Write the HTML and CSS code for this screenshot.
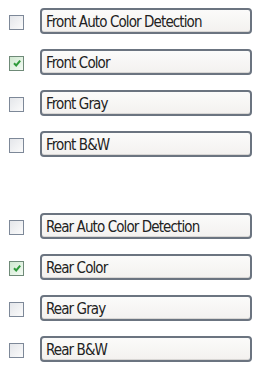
FILE: index.html
```html
<!DOCTYPE html>
<html>
<head>
<meta charset="utf-8">
<link rel="stylesheet" href="styles.css">
</head>
<body>
<div class="list">
  <div class="row"><span class="cb"></span><div class="btn">Front Auto Color Detection</div></div>
  <div class="row"><span class="cb checked"><svg viewBox="0 0 10 10" width="10" height="10"><path d="M2 5.2 L4.2 7.4 L8.2 2.6" fill="none" stroke="#2f9a3a" stroke-width="2"/></svg></span><div class="btn">Front Color</div></div>
  <div class="row"><span class="cb"></span><div class="btn">Front Gray</div></div>
  <div class="row"><span class="cb"></span><div class="btn">Front B&amp;W</div></div>
  <div class="row group"><span class="cb"></span><div class="btn">Rear Auto Color Detection</div></div>
  <div class="row"><span class="cb checked"><svg viewBox="0 0 10 10" width="10" height="10"><path d="M2 5.2 L4.2 7.4 L8.2 2.6" fill="none" stroke="#2f9a3a" stroke-width="2"/></svg></span><div class="btn">Rear Color</div></div>
  <div class="row"><span class="cb"></span><div class="btn">Rear Gray</div></div>
  <div class="row"><span class="cb"></span><div class="btn">Rear B&amp;W</div></div>
</div>
</body>
</html>
```
FILE: styles.css
```css
html, body {
  margin: 0;
  padding: 0;
  background: #ffffff;
}
.list {
  display: flex;
  flex-direction: column;
  gap: 15px;
  padding: 8px 0 0 9px;
}
.row {
  display: flex;
  align-items: center;
  height: 26px;
}
.row.group {
  margin-top: 41px;
}
.cb {
  box-sizing: border-box;
  width: 15px;
  height: 15px;
  margin-top: 2px;
  border: 1.5px solid #7d8898;
  background: linear-gradient(135deg, #e4e6ea 0%, #fbfbfb 100%);
  display: flex;
  align-items: center;
  justify-content: center;
  flex: none;
}
.cb.checked {
  border-color: #6f8a78;
  background: linear-gradient(135deg, #cfe8cf 0%, #f4fbf4 100%);
}
.btn {
  box-sizing: border-box;
  margin-left: 16px;
  width: 212px;
  height: 26px;
  border: 2px solid #6b7480;
  border-radius: 4px;
  background: linear-gradient(180deg, #fbfbfa 0%, #f3f1ef 100%);
  box-shadow: inset 0 -1px 0 #d8d6d4;
  font-family: "DejaVu Sans Condensed", "DejaVu Sans", sans-serif;
  font-stretch: condensed;
  font-size: 15px;
  letter-spacing: -0.9px;
  color: #222222;
  padding: 1px 0 0 4px;
  display: flex;
  align-items: center;
  white-space: nowrap;
}
```
